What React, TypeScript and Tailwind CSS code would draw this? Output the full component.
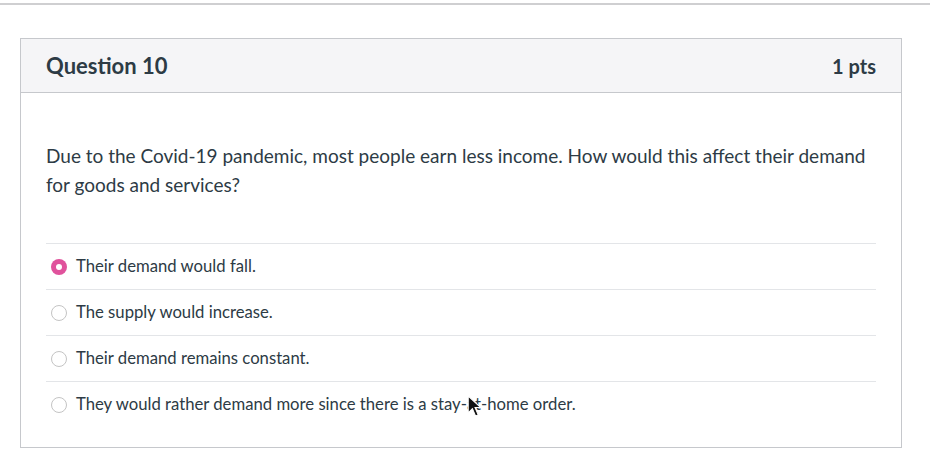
import React from 'react';

const options = [
  { text: 'Their demand would fall.', checked: true },
  { text: 'The supply would increase.', checked: false },
  { text: 'Their demand remains constant.', checked: false },
  { text: 'They would rather demand more since there is a stay-at-home order.', checked: false },
];

function Radio({ checked }: { checked: boolean }) {
  if (checked) {
    return (
      <span className="flex h-[16px] w-[16px] shrink-0 items-center justify-center rounded-full bg-[#e0529c]">
        <span className="h-[6px] w-[6px] rounded-full bg-white" />
      </span>
    );
  }
  return <span className="h-[16px] w-[16px] shrink-0 rounded-full border border-[#c4c4c4] bg-white" />;
}

export default function App() {
  return (
    <div className="h-[452px] w-[930px] overflow-hidden bg-white" style={{ fontFamily: 'Lato, "Open Sans", sans-serif' }}>
      <div className="mt-[3px] h-[2px] w-full bg-[#cfcfd1]" />

      <div className="ml-[20px] mt-[33px] w-[882px] border border-[#c6c8cc] bg-white">
        {/* Header */}
        <div className="flex h-[54px] items-center justify-between border-b border-[#c6c8cc] bg-[#f5f5f7] px-[25px]">
          <h2 className="text-[22px] font-bold text-[#2d3b45]">Question 10</h2>
          <span className="text-[20px] font-bold text-[#2d3b45]">1 pts</span>
        </div>

        {/* Body */}
        <div className="px-[25px] pb-[20px] pt-[48px]">
          <p className="text-[19px] leading-[29px] text-[#2d3b45]">
            Due to the Covid-19 pandemic, most people earn less income. How would this affect their demand for goods and services?
          </p>

          <div className="mt-[44px]">
            {options.map((o, i) => (
              <div key={i} className="relative flex h-[46px] items-center gap-[9px] border-t border-[#e3e5e8] pl-[5px]">
                <Radio checked={o.checked} />
                <span className="text-[16.7px] text-[#2d3b45]">{o.text}</span>
                {i === 3 && (
                  <svg className="absolute left-[421px] top-[13px]" width="15" height="23" viewBox="0 0 14 22">
                    <path d="M1 1 L1 17 L5 13 L8 20 L10.5 19 L7.5 12 L13 12 Z" fill="#111" stroke="#fff" strokeWidth="1" />
                  </svg>
                )}
              </div>
            ))}
          </div>
        </div>
      </div>
    </div>
  );
}
